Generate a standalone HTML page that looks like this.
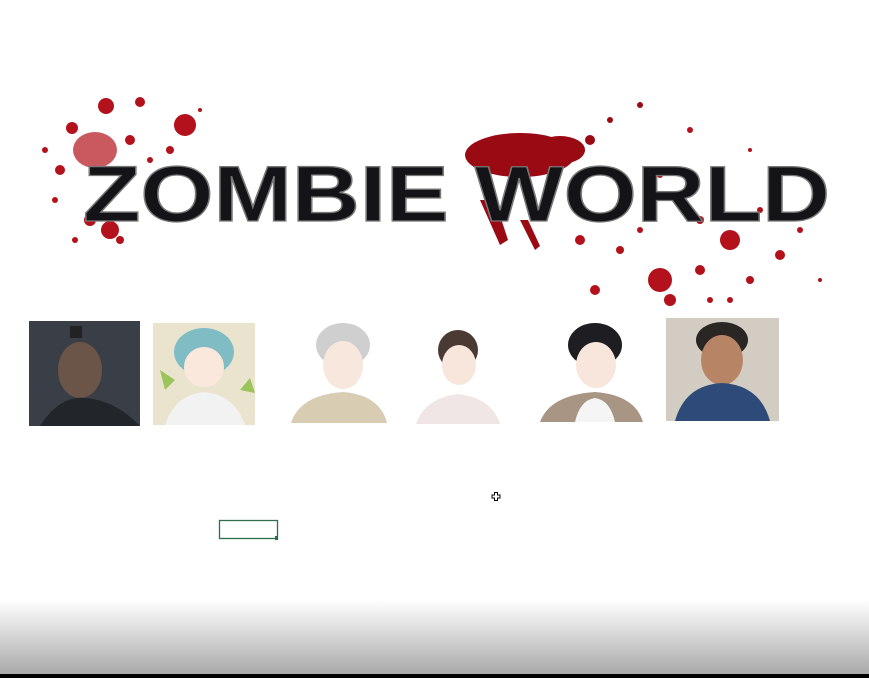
<!DOCTYPE html>
<html><head><style>
html,body{margin:0;padding:0;width:869px;height:678px;overflow:hidden;background:#fff;position:relative;font-family:"Liberation Sans",sans-serif}
.abs{position:absolute}
</style></head><body>
<svg class="abs" style="left:0;top:0" width="869" height="678">
 <g fill="#b3111b">
  <circle cx="106" cy="106" r="8"/><circle cx="140" cy="102" r="5"/><circle cx="185" cy="125" r="11"/>
  <ellipse cx="95" cy="150" rx="22" ry="18" opacity=".7"/><circle cx="72" cy="128" r="6"/><circle cx="60" cy="170" r="5"/>
  <circle cx="110" cy="230" r="9"/><circle cx="90" cy="220" r="6"/><circle cx="55" cy="200" r="3"/><circle cx="170" cy="150" r="4"/>
  <circle cx="130" cy="140" r="5"/><circle cx="45" cy="150" r="3"/><circle cx="120" cy="240" r="4"/><circle cx="200" cy="110" r="2"/>
  <circle cx="75" cy="240" r="3"/><circle cx="150" cy="160" r="3"/>
 </g>
 <g fill="#9a0a12">
  <ellipse cx="520" cy="155" rx="55" ry="22"/><ellipse cx="560" cy="150" rx="25" ry="14"/>
  <path d="M480 200 L500 245 L508 240 L495 200Z"/><path d="M520 220 L535 250 L540 246 L528 220Z"/>
  <circle cx="590" cy="140" r="5"/><circle cx="610" cy="120" r="3"/><circle cx="640" cy="105" r="3"/>
 </g>
 <g fill="#b3111b">
  <circle cx="730" cy="240" r="10"/><circle cx="660" cy="280" r="12"/><circle cx="670" cy="300" r="6"/><circle cx="700" cy="270" r="5"/>
  <circle cx="750" cy="280" r="4"/><circle cx="780" cy="255" r="5"/><circle cx="620" cy="250" r="4"/><circle cx="595" cy="290" r="5"/>
  <circle cx="640" cy="230" r="3"/><circle cx="800" cy="230" r="3"/><circle cx="710" cy="300" r="3"/><circle cx="690" cy="130" r="3"/>
  <circle cx="750" cy="150" r="2"/><circle cx="660" cy="175" r="3"/><circle cx="820" cy="280" r="2"/><circle cx="580" cy="240" r="5"/>
  <circle cx="700" cy="220" r="4"/><circle cx="760" cy="210" r="3"/><circle cx="730" cy="300" r="3"/>
 </g>
 <text x="83" y="221" textLength="747" lengthAdjust="spacingAndGlyphs" font-family="Liberation Sans" font-weight="bold" font-size="88" fill="#141418" stroke="#777" stroke-width="1.5" transform="translate(0,22) scale(1,0.9)">ZOMBIE WORLD</text>
 <linearGradient id="bg" x1="0" y1="0" x2="0" y2="1"><stop offset="0" stop-color="#fff"/><stop offset="1" stop-color="#a8a8a8"/></linearGradient>
 <rect x="0" y="600" width="869" height="75" fill="url(#bg)"/>
 <rect x="0" y="674" width="869" height="4" fill="#000"/>
 <rect x="219.5" y="520.5" width="58" height="18" fill="none" stroke="#2e6e4a" stroke-width="1.3"/>
 <rect x="275" y="536" width="3" height="4" fill="#2e6e4a"/>
 <path d="M494.5 492.5h3v2.5h2.5v3h-2.5v2.5h-3v-2.5h-2.5v-3h2.5z" fill="#fff" stroke="#000"/>

 <rect x="29" y="321" width="111" height="105" fill="#3a3f47"/>
 <ellipse cx="80" cy="370" rx="22" ry="28" fill="#6b5548"/>
 <path d="M40 426 Q60 395 85 398 Q115 400 140 426Z" fill="#22252a"/>
 <rect x="70" y="326" width="12" height="12" fill="#222"/>
 <rect x="153" y="323" width="102" height="102" fill="#eae4cf"/>
 <ellipse cx="204" cy="352" rx="30" ry="24" fill="#7fbcc4"/>
 <ellipse cx="204" cy="367" rx="20" ry="20" fill="#fbe8dc"/>
 <path d="M165 425 Q175 395 204 392 Q235 395 245 425Z" fill="#f2f2f2"/>
 <path d="M160 370 l15 10 -10 10z M240 390 l10 -12 5 15z" fill="#9bc45a"/>
 <ellipse cx="343" cy="345" rx="27" ry="22" fill="#cfcfcf"/>
 <ellipse cx="343" cy="365" rx="20" ry="24" fill="#f7e7dc"/>
 <path d="M291 423 Q300 395 343 392 Q380 395 387 423Z" fill="#d8ccb3"/>
 <ellipse cx="458" cy="350" rx="20" ry="20" fill="#4a3a33"/>
 <ellipse cx="459" cy="365" rx="17" ry="20" fill="#f8e6dc"/>
 <path d="M416 424 Q425 398 458 394 Q492 398 500 424Z" fill="#f1e6e6"/>
 <ellipse cx="595" cy="345" rx="27" ry="22" fill="#1e1e22"/>
 <ellipse cx="596" cy="365" rx="20" ry="23" fill="#f8e6dc"/>
 <path d="M540 422 Q550 395 595 392 Q635 395 643 422Z" fill="#a89584"/>
 <path d="M575 422 Q580 400 595 398 Q610 400 615 422Z" fill="#f5f5f5"/>
 <rect x="666" y="318" width="113" height="103" fill="#d2ccc3"/>
 <ellipse cx="722" cy="340" rx="26" ry="18" fill="#2a2624"/>
 <ellipse cx="722" cy="360" rx="21" ry="25" fill="#b88466"/>
 <path d="M675 421 Q685 385 722 383 Q760 385 770 421Z" fill="#2e4a78"/>
</svg>
</body></html>
